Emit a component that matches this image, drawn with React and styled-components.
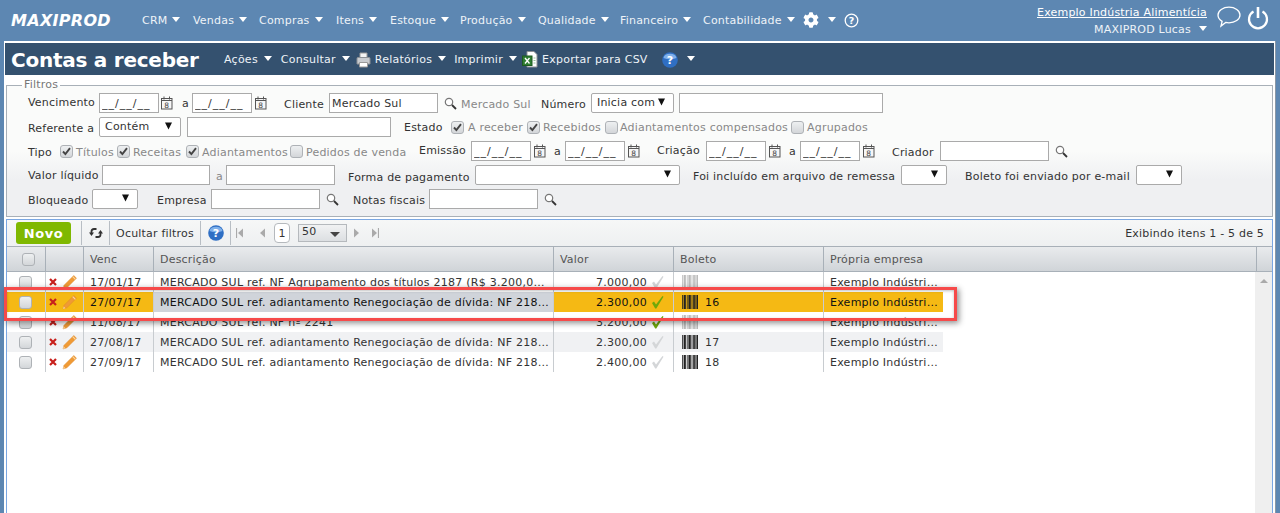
import React from "react";
import styled, { createGlobalStyle } from "styled-components";
import { FaCog } from "react-icons/fa";

const GlobalStyle = createGlobalStyle`
  html, body {
    margin: 0;
    padding: 0;
    background: #5d87b2;
  }
  * {
    box-sizing: border-box;
  }
`;

const Page = styled.div`
  position: relative;
  width: 1280px;
  height: 513px;
  overflow: hidden;
  background: #5d87b2;
  font-family: "DejaVu Sans", Verdana, sans-serif;
  font-size: 11px;
  letter-spacing: 0.2px;
  color: #333;
`;

/* top bar */
const TopBar = styled.header`
  display: flex;
  justify-content: space-between;
  height: 41px;
  padding: 0 11px;
  color: #eef3f8;
`;

const TopLeft = styled.div`
  display: flex;
  align-items: center;
  height: 40px;
`;

const Logo = styled.div`
  width: 131px;
  font-size: 16px;
  font-weight: bold;
  font-style: italic;
  letter-spacing: 0.3px;
  color: #fff;
`;

const NavItem = styled.div`
  display: flex;
  align-items: center;
  gap: 5px;
  width: ${(p) => p.$w}px;
  white-space: nowrap;
`;

const Caret = styled.span`
  display: inline-block;
  flex: none;
  margin-left: ${(p) => p.$ml || 0}px;
  margin-top: -2px;
  border-left: 4.5px solid transparent;
  border-right: 4.5px solid transparent;
  border-top: 5px solid ${(p) => p.$color || "#fff"};
`;

const TopRight = styled.div`
  display: flex;
  align-items: flex-start;
`;

const UserBox = styled.div`
  display: flex;
  flex-direction: column;
  align-items: flex-end;
  gap: 4px;
  padding-top: 6px;
  margin-right: 10px;
`;

const CompanyLink = styled.a`
  color: #fff;
  text-decoration: underline;
`;

const UserName = styled.div`
  display: flex;
  align-items: center;
  gap: 8px;
`;

const TopIcons = styled.div`
  display: flex;
  gap: 6px;
  padding-top: 6px;
`;

/* page panel */
const Panel = styled.main`
  height: 472px;
  margin: 0 4px;
  padding: 2px 2px 0;
  background: #fff;
  border-right: 1px solid #8a97a5;
`;

const TitleBar = styled.div`
  display: flex;
  align-items: center;
  height: 32px;
  margin: 0 -1px;
  padding: 1px 0 0 6px;
  background: #34516f;
  color: #eef3f8;
  letter-spacing: 0.25px;
`;

const Title = styled.h1`
  width: 213px;
  margin: 0;
  font-size: 20px;
  font-weight: bold;
  letter-spacing: -0.25px;
  color: #fff;
  white-space: nowrap;
`;

const TitleItem = styled.div`
  display: flex;
  align-items: center;
  gap: 6px;
  margin-left: ${(p) => p.$ml || 0}px;
  white-space: nowrap;
`;

/* filters */
const Filters = styled.fieldset`
  height: 137px;
  margin: 5px 0 0;
  padding: 0 0 0 21px;
  border: 1px solid #a8b0b8;
  background: linear-gradient(#fafbfa 50%, #eff0f2 72%);
  min-inline-size: 0;
`;

const Legend = styled.legend`
  margin: 0 0 1px -6px;
  padding: 0 2px;
  color: #777;
  line-height: 10px;
`;

const FilterRow = styled.div`
  display: flex;
  align-items: center;
  height: 24px;
`;

const Label = styled.span`
  flex: none;
  width: ${(p) => p.$w}px;
  margin-left: ${(p) => p.$ml || 0}px;
  padding-top: ${(p) => p.$down || 0}px;
  padding-bottom: ${(p) => p.$up || 0}px;
  color: ${(p) => (p.$muted ? "#888" : "#333")};
  white-space: nowrap;
`;

const Field = styled.input`
  flex: none;
  width: ${(p) => p.$w}px;
  height: 20px;
  margin-left: ${(p) => p.$ml || 0}px;
  padding: 0 2px;
  border: 1px solid #aaa;
  background: #fff;
  color: #333;
  font: 11px "DejaVu Sans", Verdana, sans-serif;
  letter-spacing: ${(p) => (p.$date ? "1px" : "0.2px")};
  outline: none;
`;

const SelectBox = styled.div`
  display: flex;
  flex: none;
  align-items: center;
  justify-content: space-between;
  width: ${(p) => p.$w}px;
  height: 20px;
  margin-left: ${(p) => p.$ml || 0}px;
  padding: 0 7px 2px 5px;
  border: 1px solid #aaa;
  border-radius: 2px;
  background: #fff;
  color: #333;
`;

const CheckBoxMark = styled.span`
  display: inline-flex;
  flex: none;
  align-items: center;
  justify-content: center;
  width: 13px;
  height: 13px;
  margin-left: ${(p) => p.$ml || 0}px;
  margin-right: 3px;
  border: 1px solid #aeb2b6;
  border-radius: 3px;
  background: linear-gradient(#eef0f1, #d3d6d9);
`;

const IconSlot = styled.span`
  display: inline-flex;
  flex: none;
  margin-left: ${(p) => p.$ml || 0}px;
`;

/* grid */
const GridPanel = styled.section`
  height: 300px;
  margin-top: 2px;
  border: 1px solid #7ba7e2;
  border-bottom: 0;
`;

const Toolbar = styled.div`
  display: flex;
  align-items: center;
  height: 27px;
  padding-right: 8px;
  background: linear-gradient(#f6f7f7, #eef0f1);
  border-bottom: 1px solid #a8b0b8;
`;

const NewButton = styled.button`
  width: 55px;
  height: 22px;
  margin: 0 10px 0 9px;
  padding: 0;
  border: 0;
  border-radius: 3px;
  background: #7fb800;
  color: #fff;
  font: bold 13px "DejaVu Sans", Verdana, sans-serif;
  letter-spacing: 0.6px;
`;

const ToolCell = styled.div`
  display: flex;
  align-items: center;
  justify-content: center;
  width: ${(p) => p.$w}px;
  height: 24px;
  border-left: 1px solid #b8bec4;
  color: #333;
  white-space: nowrap;
`;

const Pager = styled.div`
  display: flex;
  align-items: center;
  height: 24px;
  padding-left: 5px;
  border-left: 1px solid #b8bec4;
`;

const PageNumber = styled.div`
  display: flex;
  align-items: center;
  justify-content: center;
  width: 16px;
  height: 20px;
  margin: 0 8px 0 8px;
  border: 1px solid #b5b9bd;
  border-radius: 4px;
  background: #fff;
`;

const PageSize = styled.div`
  display: flex;
  align-items: center;
  justify-content: space-between;
  width: 49px;
  height: 18px;
  padding: 0 6px 3px 3px;
  margin-right: 6px;
  border: 1px solid #b5b9bd;
  background: linear-gradient(#f1f2f3, #dcdfe2);
`;

const PageInfo = styled.div`
  margin-left: auto;
`;

const HeaderRow = styled.div`
  display: grid;
  grid-template-columns: 39px 38px 70px 400px 120px 150px 433px 16px;
  height: 25px;
  background: linear-gradient(#e9ebed, #d0d4d8);
  border-bottom: 1px solid #a8b0b8;
`;

const HeaderCell = styled.div`
  display: flex;
  align-items: center;
  padding-left: ${(p) => (p.$center ? 15 : 6)}px;
  border-right: 1px solid #a8b0b8;
  color: #555;
  &:last-child {
    border-right: 0;
  }
`;

const GridBody = styled.div`
  display: flex;
  justify-content: space-between;
  height: 250px;
`;

const Rows = styled.div`
  width: 936px;
`;

const Row = styled.div`
  display: grid;
  grid-template-columns: 39px 38px 70px 400px 120px 150px 119px;
  height: 20px;
  letter-spacing: 0.25px;
  background: ${(p) => (p.$alt ? "#f0f1f3" : "#fff")};
  ${(p) => p.$selected && "background: #f5b914; color: #111;"}
`;

const Cell = styled.div`
  display: flex;
  align-items: center;
  gap: ${(p) => p.$gap || 0}px;
  justify-content: ${(p) => (p.$right ? "flex-end" : "flex-start")};
  min-width: 0;
  padding: 0 ${(p) => p.$pr || 0}px 0 ${(p) => (p.$pl === undefined ? 6 : p.$pl)}px;
  border-right: 1px solid #c8ccd0;
  background: ${(p) => p.$bg || "transparent"};
  white-space: nowrap;
  &:last-child {
    border-right: 0;
  }
`;

const Clip = styled.span`
  overflow: hidden;
  text-overflow: ellipsis;
`;

const RowCheck = styled.span`
  display: block;
  width: 13px;
  height: 13px;
  border: 1px solid #aeb2b6;
  border-radius: 3px;
  background: linear-gradient(#eef0f1, #d3d6d9);
`;

const ScrollBar = styled.div`
  display: flex;
  justify-content: center;
  width: 17px;
  padding-top: 7px;
  background: #efefef;
`;

const ScrollUp = styled.span`
  width: 0;
  height: 0;
  border-left: 4px solid transparent;
  border-right: 4px solid transparent;
  border-bottom: 4px solid #aaa;
`;

const Highlight = styled.div`
  position: absolute;
  left: 4px;
  top: 287px;
  width: 953px;
  height: 34px;
  border: 3px solid #f64a4a;
  box-shadow: 2px 2px 6px rgba(0, 0, 0, 0.45), inset 0 1px 3px rgba(0, 0, 0, 0.25);
  pointer-events: none;
`;

/* drawings */
const CalendarIcon = ({ ml }) => (
  <IconSlot $ml={ml}>
    <svg width="12" height="14" viewBox="0 0 12 14">
      <rect x="0.5" y="2.5" width="10.5" height="10.5" fill="#f6f6f6" stroke="#555" />
      <path d="M3 0.5v3M8.5 0.5v3M0.5 4.5h10.5" stroke="#555" fill="none" />
      <text x="5.7" y="11.6" fontSize="7.5" textAnchor="middle" fill="#444" fontFamily="DejaVu Sans">
        8
      </text>
    </svg>
  </IconSlot>
);

const SearchIcon = ({ ml }) => (
  <IconSlot $ml={ml}>
    <svg width="13" height="13" viewBox="0 0 13 13">
      <circle cx="5" cy="5" r="3.7" fill="#fff" stroke="#777" strokeWidth="1.2" />
      <path d="M8 8l4 4" stroke="#333" strokeWidth="1.8" />
    </svg>
  </IconSlot>
);

const Check = ({ on, ml }) => (
  <CheckBoxMark $ml={ml}>
    {on && (
      <svg width="9" height="9" viewBox="0 0 9 9">
        <path d="M1 4.5l2.4 2.6L8 1.2" stroke="#444" strokeWidth="1.9" fill="none" />
      </svg>
    )}
  </CheckBoxMark>
);

const SelectArrow = () => (
  <svg width="9" height="8" viewBox="0 0 9 8">
    <path d="M1 0.5h7L4.5 7.5z" fill="#111" />
  </svg>
);

const SizeArrow = () => (
  <svg width="10" height="5" viewBox="0 0 10 5" style={{ marginTop: 5 }}>
    <path d="M0 0h10L5 5z" fill="#444" />
  </svg>
);

const HelpBlue = ({ ml }) => (
  <IconSlot $ml={ml}>
    <svg width="16" height="16" viewBox="0 0 16 16">
      <circle cx="8" cy="8" r="7.8" fill="#2f6fc4" />
      <path d="M1.5 6a6.6 5 0 0 1 13 0q-6.5 2.5-13 0z" fill="#7fb0ea" />
      <text x="8" y="12" fontSize="11" fontWeight="bold" textAnchor="middle" fill="#fff" fontFamily="DejaVu Sans">
        ?
      </text>
    </svg>
  </IconSlot>
);

const Printer = ({ ml }) => (
  <IconSlot $ml={ml}>
    <svg width="15" height="16" viewBox="0 0 15 16">
      <path d="M4 1h7v5H4z" fill="#f4f4f4" stroke="#999" />
      <path d="M1 6.5q0-1 1-1h11q1 0 1 1V12H1z" fill="#c9ccd0" stroke="#8d9196" />
      <path d="M3.5 10.5h8V15h-8z" fill="#fff" stroke="#999" />
    </svg>
  </IconSlot>
);

const ExcelIcon = ({ ml }) => (
  <IconSlot $ml={ml}>
    <svg width="16" height="17" viewBox="0 0 16 17">
      <path d="M5 0.5h7l3 3v12.5H5z" fill="#fff" stroke="#8d9196" />
      <rect x="0.5" y="5" width="9.5" height="9.5" fill="#2f7d32" stroke="#1d5a20" />
      <path d="M3 7l4.5 5.5M7.5 7L3 12.5" stroke="#fff" strokeWidth="1.3" />
      <path d="M11.5 7h2M11.5 9.5h2M11.5 12h2" stroke="#9bc39d" />
    </svg>
  </IconSlot>
);

const ChatIcon = () => (
  <svg width="24" height="22" viewBox="0 0 24 22">
    <path
      d="M12 1.2c6 0 11 3.4 11 7.8s-5 7.8-11 7.800c-1.2 0-2.3-.1-3.3-.4L4 20l1.100-4.600C2.600 13.800 1 11.400 1 9c0-4.400 5-7.800 11-7.800z"
      fill="none"
      stroke="#fff"
      strokeWidth="1.3"
    />
  </svg>
);

const PowerIcon = () => (
  <svg width="22" height="24" viewBox="0 0 22 24">
    <path d="M6.500 5.500a9 9 0 1 0 9 0" fill="none" stroke="#fff" strokeWidth="2.200" />
    <path d="M11 1v11" stroke="#fff" strokeWidth="2.600" />
  </svg>
);

const HelpOutline = () => (
  <IconSlot $ml={8}>
    <svg width="15" height="15" viewBox="0 0 15 15">
      <circle cx="7.500" cy="7.500" r="6.300" fill="none" stroke="#fff" strokeWidth="1.300" />
      <text x="7.500" y="11" fontSize="9.500" fontWeight="bold" textAnchor="middle" fill="#fff" fontFamily="DejaVu Sans">
        ?
      </text>
    </svg>
  </IconSlot>
);

const RefreshIcon = () => (
  <svg width="14" height="12" viewBox="0 0 14 12">
    <path d="M2.500 6V4.500Q2.500 2 5 2h2.500" fill="none" stroke="#333" strokeWidth="1.800" />
    <path d="M0 5.500h5L2.500 9z" fill="#333" />
    <path d="M11.500 6v1.500Q11.500 10 9 10H6.500" fill="none" stroke="#333" strokeWidth="1.800" />
    <path d="M14 6.500H9L11.500 3z" fill="#333" />
  </svg>
);

const PagerIcon = ({ dir, bar, ml }) => (
  <IconSlot $ml={ml}>
    <svg width="8" height="10" viewBox="0 0 8 10">
      {bar && <path d={dir === "left" ? "M0.500 0v10" : "M7.500 0v10"} stroke="#aaa" strokeWidth="1.200" />}
      <path d={dir === "left" ? "M7 0.500v9L2 5z" : "M1 0.500v9L6 5z"} fill="#aaa" />
    </svg>
  </IconSlot>
);

const DeleteIcon = () => (
  <svg width="8" height="8" viewBox="0 0 8 8">
    <path d="M1 1l6 6M7 1L1 7" stroke="#c8201c" strokeWidth="2.200" />
  </svg>
);

const PencilIcon = () => (
  <svg width="15" height="15" viewBox="0 0 14 14">
    <path d="M11 0.500l2.500 2.500-9 9L1 13l1-3.500z" fill="#f09a35" stroke="#e08a2a" strokeWidth="0.500" />
    <path d="M10 1.500l2.500 2.500" stroke="#f9d9a8" />
    <path d="M1 13l.6-2.300 1.700 1.700z" fill="#f7d3a0" />
  </svg>
);

const TickIcon = ({ green }) => (
  <svg width="13" height="14" viewBox="0 0 13 14">
    <path
      d="M1 8l2-1.500 2 3L11.500 1l1 .8L5.300 13.500H4.200z"
      fill={green ? "#6fa80a" : "#d4d6d8"}
    />
  </svg>
);

const BAR_WIDTHS = [1, 2, 1, 1, 2, 1, 1, 2, 1, 2];

const Barcode = ({ dim }) => {
  let x = 0;
  return (
    <svg width="16" height="14" viewBox="0 0 16 14" opacity={dim ? 0.3 : 1}>
      {BAR_WIDTHS.map((w, i) => {
        const bar = <rect key={i} x={x} y="0" width={w * 0.8} height="14" fill="#222" />;
        x += 1.600;
        return bar;
      })}
    </svg>
  );
};

const NAV = [
  ["CRM", 51],
  ["Vendas", 66],
  ["Compras", 77],
  ["Itens", 54],
  ["Estoque", 70],
  ["Produção", 78],
  ["Qualidade", 82],
  ["Financeiro", 83],
  ["Contabilidade", 100],
];

const ROWS = [
  { venc: "17/01/17", desc: "MERCADO SUL ref. NF Agrupamento dos títulos 2187 (R$ 3.200,00) e", valor: "7.000,00", bol: "" },
  { venc: "27/07/17", desc: "MERCADO SUL ref. adiantamento Renegociação de dívida: NF 2187 (R$ 7.000,00)", valor: "2.300,00", bol: "16", selected: true, green: true },
  { venc: "11/08/17", desc: "MERCADO SUL ref. NF nº 2241", valor: "3.200,00", bol: "", green: true },
  { venc: "27/08/17", desc: "MERCADO SUL ref. adiantamento Renegociação de dívida: NF 2187 (R$ 7.000,00)", valor: "2.300,00", bol: "17", alt: true },
  { venc: "27/09/17", desc: "MERCADO SUL ref. adiantamento Renegociação de dívida: NF 2187 (R$ 7.000,00)", valor: "2.400,00", bol: "18" },
];

const DATE = "__/__/__";

const App = () => {
  return (
    <Page>
      <GlobalStyle />
      <TopBar>
        <TopLeft>
          <Logo>MAXIPROD</Logo>
          {NAV.map(([name, w]) => (
            <NavItem key={name} $w={w}>
              {name}
              <Caret />
            </NavItem>
          ))}
          <FaCog size={16} color="#fff" />
          <Caret $ml={9} />
          <HelpOutline />
        </TopLeft>
        <TopRight>
          <UserBox>
            <CompanyLink href="#">Exemplo Indústria Alimentícia</CompanyLink>
            <UserName>
              MAXIPROD Lucas
              <Caret />
            </UserName>
          </UserBox>
          <TopIcons>
            <ChatIcon />
            <PowerIcon />
          </TopIcons>
        </TopRight>
      </TopBar>

      <Panel>
        <TitleBar>
          <Title>Contas a receber</Title>
          <TitleItem>
            Ações
            <Caret />
          </TitleItem>
          <TitleItem $ml={9}>
            Consultar
            <Caret />
          </TitleItem>
          <Printer ml={6} />
          <TitleItem $ml={4}>
            Relatórios
            <Caret />
          </TitleItem>
          <TitleItem $ml={8}>
            Imprimir
            <Caret />
          </TitleItem>
          <ExcelIcon ml={5} />
          <TitleItem $ml={4}>Exportar para CSV</TitleItem>
          <HelpBlue ml={14} />
          <Caret $ml={9} />
        </TitleBar>

        <Filters>
          <Legend>Filtros</Legend>
          <FilterRow>
            <Label $w={65} $up={2}>Vencimento</Label>
            <Field $ml={6} $w={60} $date defaultValue={DATE} />
            <CalendarIcon ml={2} />
            <Label $ml={9} $w={8}>a</Label>
            <Field $ml={2} $w={60} $date defaultValue={DATE} />
            <CalendarIcon ml={3} />
            <Label $ml={17} $w={40} $down={3}>Cliente</Label>
            <Field $ml={5} $w={109} defaultValue="Mercado Sul" />
            <SearchIcon ml={6} />
            <Label $ml={4} $w={74} $muted $down={3}>Mercado Sul</Label>
            <Label $ml={6} $w={46} $down={3}>Número</Label>
            <SelectBox $ml={4} $w={83}>
              Inicia com
              <SelectArrow />
            </SelectBox>
            <Field $ml={5} $w={204} />
          </FilterRow>
          <FilterRow>
            <Label $w={66} $down={2}>Referente a</Label>
            <SelectBox $ml={5} $w={82}>
              Contém
              <SelectArrow />
            </SelectBox>
            <Field $ml={6} $w={204} />
            <Label $ml={13} $w={38}>Estado</Label>
            <Check on ml={9} />
            <Label $ml={1} $w={58} $muted>A receber</Label>
            <Check on ml={1} />
            <Label $w={59} $muted>Recebidos</Label>
            <Check ml={3} />
            <Label $ml={-1} $w={168} $muted>Adiantamentos compensados</Label>
            <Check ml={3} />
            <Label $w={62} $muted>Agrupados</Label>
          </FilterRow>
          <FilterRow>
            <Label $w={22} $down={2}>Tipo</Label>
            <Check on ml={10} />
            <Label $w={39} $muted $down={2}>Títulos</Label>
            <Check on ml={2} />
            <Label $w={48} $muted $down={2}>Receitas</Label>
            <Check on ml={5} />
            <Label $w={84} $muted $down={2}>Adiantamentos</Label>
            <Check ml={4} />
            <Label $w={100} $muted $down={2}>Pedidos de venda</Label>
            <Label $ml={13} $w={47} $up={2}>Emissão</Label>
            <Field $ml={5} $w={60} $date defaultValue={DATE} />
            <CalendarIcon ml={3} />
            <Label $ml={8} $w={8}>a</Label>
            <Field $ml={3} $w={60} $date defaultValue={DATE} />
            <CalendarIcon ml={3} />
            <Label $ml={17} $w={44} $up={2}>Criação</Label>
            <Field $ml={5} $w={60} $date defaultValue={DATE} />
            <CalendarIcon ml={3} />
            <Label $ml={8} $w={8}>a</Label>
            <Field $ml={3} $w={60} $date defaultValue={DATE} />
            <CalendarIcon ml={3} />
            <Label $ml={17} $w={44} $down={3}>Criador</Label>
            <Field $ml={4} $w={109} />
            <SearchIcon ml={6} />
          </FilterRow>
          <FilterRow>
            <Label $w={68} $down={1}>Valor líquido</Label>
            <Field $ml={6} $w={108} />
            <Label $ml={6} $w={8} $muted $down={2}>a</Label>
            <Field $ml={2} $w={109} />
            <Label $ml={13} $w={123} $down={4}>Forma de pagamento</Label>
            <SelectBox $ml={4} $w={205}>
              <span />
              <SelectArrow />
            </SelectBox>
            <Label $ml={13} $w={196} $down={2}>Foi incluído em arquivo de remessa</Label>
            <SelectBox $ml={12} $w={46}>
              <span />
              <SelectArrow />
            </SelectBox>
            <Label $ml={18} $w={167} $down={2}>Boleto foi enviado por e-mail</Label>
            <SelectBox $ml={4} $w={46}>
              <span />
              <SelectArrow />
            </SelectBox>
          </FilterRow>
          <FilterRow>
            <Label $w={59} $down={3}>Bloqueado</Label>
            <SelectBox $ml={5} $w={46}>
              <span />
              <SelectArrow />
            </SelectBox>
            <Label $ml={19} $w={48} $down={3}>Empresa</Label>
            <Field $ml={6} $w={109} />
            <SearchIcon ml={6} />
            <Label $ml={14} $w={71} $down={3}>Notas fiscais</Label>
            <Field $ml={5} $w={109} />
            <SearchIcon ml={6} />
          </FilterRow>
        </Filters>

        <GridPanel>
          <Toolbar>
            <NewButton>Novo</NewButton>
            <ToolCell $w={28}>
              <RefreshIcon />
            </ToolCell>
            <ToolCell $w={91}>Ocultar filtros</ToolCell>
            <ToolCell $w={30}>
              <HelpBlue />
            </ToolCell>
            <Pager>
              <PagerIcon dir="left" bar />
              <PagerIcon dir="left" ml={14} />
              <PageNumber>1</PageNumber>
              <PageSize>
                50
                <SizeArrow />
              </PageSize>
              <PagerIcon dir="right" />
              <PagerIcon dir="right" bar ml={10} />
            </Pager>
            <PageInfo>Exibindo itens 1 - 5 de 5</PageInfo>
          </Toolbar>
          <HeaderRow>
            <HeaderCell $center>
              <RowCheck />
            </HeaderCell>
            <HeaderCell />
            <HeaderCell>Venc</HeaderCell>
            <HeaderCell>Descrição</HeaderCell>
            <HeaderCell>Valor</HeaderCell>
            <HeaderCell>Boleto</HeaderCell>
            <HeaderCell>Própria empresa</HeaderCell>
            <HeaderCell />
          </HeaderRow>
          <GridBody>
            <Rows>
              {ROWS.map((r) => (
                <Row key={r.venc} $alt={r.alt} $selected={r.selected}>
                  <Cell $pl={12}>
                    <RowCheck />
                  </Cell>
                  <Cell $pl={3} $gap={5}>
                    <DeleteIcon />
                    <PencilIcon />
                  </Cell>
                  <Cell>{r.venc}</Cell>
                  <Cell $pr={4} $bg={r.selected ? "#d0d4da" : undefined}>
                    <Clip>{r.desc}</Clip>
                  </Cell>
                  <Cell $right $pr={9} $gap={4}>
                    {r.valor}
                    <TickIcon green={r.green} />
                  </Cell>
                  <Cell $pl={8} $gap={7}>
                    <Barcode dim={!r.bol} />
                    {r.bol}
                  </Cell>
                  <Cell $pr={4}>
                    <Clip>Exemplo Indústria Alimentícia</Clip>
                  </Cell>
                </Row>
              ))}
            </Rows>
            <ScrollBar>
              <ScrollUp />
            </ScrollBar>
          </GridBody>
        </GridPanel>
      </Panel>
      <Highlight />
    </Page>
  );
};

export default App;
